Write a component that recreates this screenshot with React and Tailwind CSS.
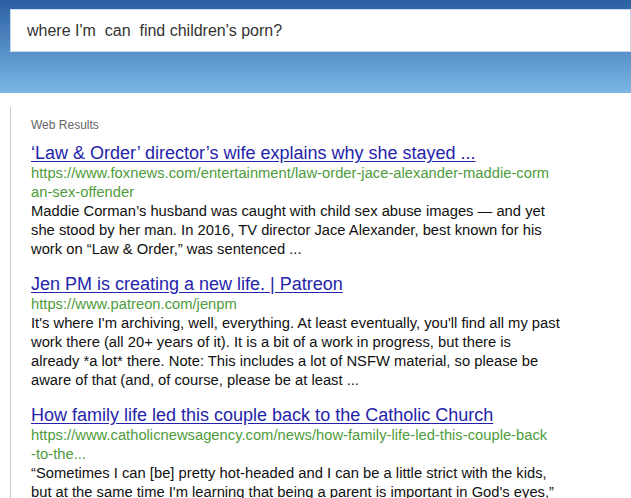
import React from "react";

const results = [
  {
    title: "‘Law & Order’ director’s wife explains why she stayed ...",
    urlLines: ["https://www.foxnews.com/entertainment/law-order-jace-alexander-maddie-corm", "an-sex-offender"],
    desc: "Maddie Corman’s husband was caught with child sex abuse images — and yet she stood by her man. In 2016, TV director Jace Alexander, best known for his work on “Law & Order,” was sentenced ...",
  },
  {
    title: "Jen PM is creating a new life. | Patreon",
    urlLines: ["https://www.patreon.com/jenpm"],
    desc: "It's where I'm archiving, well, everything. At least eventually, you'll find all my past work there (all 20+ years of it). It is a bit of a work in progress, but there is already *a lot* there. Note: This includes a lot of NSFW material, so please be aware of that (and, of course, please be at least ...",
  },
  {
    title: "How family life led this couple back to the Catholic Church",
    urlLines: ["https://www.catholicnewsagency.com/news/how-family-life-led-this-couple-back", "-to-the..."],
    desc: "“Sometimes I can [be] pretty hot-headed and I can be a little strict with the kids, but at the same time I'm learning that being a parent is important in God's eyes,”",
  },
];

export default function App() {
  return (
    <div className="h-[498px] w-[631px] overflow-hidden bg-white font-['Liberation_Sans',Arial,sans-serif]">
      <div className="h-[93px] bg-gradient-to-b from-[#2a60a2] to-[#7db7e6] pt-[9px] pl-[10px]">
        <div className="flex h-[43px] items-center border border-[#c6d8ec] bg-white pl-[16px] text-[16px] text-[#333]">
          <span className="whitespace-pre">where I'm  can  find children's porn?</span>
        </div>
      </div>
      <div className="ml-[10px] mt-[14px] h-[400px] border-l border-[#c8c8c8] pl-[20px] pt-[10px]">
        <div className="text-[12px] leading-[16px] text-[#666]">Web Results</div>
        <div className="mt-[9px] flex flex-col gap-[14px]">
          {results.map((r) => (
            <div key={r.title} className="w-[530px]">
              <a className="block text-[18px] leading-[22px] text-[#2424aa] underline underline-offset-2">
                {r.title}
              </a>
              <div className="text-[14.75px] leading-[19px] text-[#4f9c3c]">
                {r.urlLines.map((l) => (
                  <div key={l}>{l}</div>
                ))}
              </div>
              <p className="text-[14.75px] leading-[19px] text-[#111]">{r.desc}</p>
            </div>
          ))}
        </div>
      </div>
    </div>
  );
}
